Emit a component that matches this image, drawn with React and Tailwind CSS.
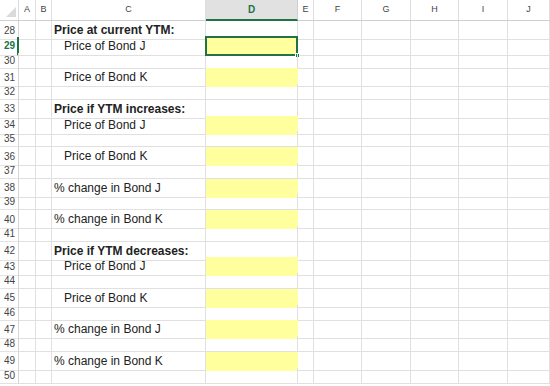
import React from 'react';

const cols = ['A', 'B', 'C', 'D', 'E', 'F', 'G', 'H', 'I', 'J'];

// row number -> [text, bold, indent, yellow]
const rows = [
    [28, 'Price at current YTM:', true, false, false],
    [29, 'Price of Bond J', false, true, true],
    [30, '', false, false, false],
    [31, 'Price of Bond K', false, true, true],
    [32, '', false, false, false],
    [33, 'Price if YTM increases:', true, false, false],
    [34, 'Price of Bond J', false, true, true],
    [35, '', false, false, false],
    [36, 'Price of Bond K', false, true, true],
    [37, '', false, false, false],
    [38, '% change in Bond J', false, false, true],
    [39, '', false, false, false],
    [40, '% change in Bond K', false, false, true],
    [41, '', false, false, false],
    [42, 'Price if YTM decreases:', true, false, false],
    [43, 'Price of Bond J', false, true, true],
    [44, '', false, false, false],
    [45, 'Price of Bond K', false, true, true],
    [46, '', false, false, false],
    [47, '% change in Bond J', false, false, true],
    [48, '', false, false, false],
    [49, '% change in Bond K', false, false, true],
    [50, '', false, false, false],
];

const grid = 'grid grid-cols-[19px_17px_16px_154px_92px_16px_48px_49px_48px_49px_1fr]';

export default function App() {
    return (
        <div className="w-[550px] h-[386px] overflow-hidden bg-white text-[#222]" style={{ fontFamily: '"Liberation Sans", Arial, sans-serif' }}>
            {/* Column headers */}
            <div className={`${grid} h-[21px] border-b border-[#cfcfcf]`}>
                <div className="relative border-r border-[#dcdcdc]">
                    <div className="absolute right-[2px] bottom-[3px] w-0 h-0 border-l-[10px] border-l-transparent border-b-[10px] border-b-[#dadada]" />
                </div>
                {cols.map(c => (
                    c === 'D' ? (
                        <div key={c} className="flex items-center justify-center bg-[#e1e1e1] border-b-2 border-[#217346] -mb-px border-r border-r-[#cfcfcf] text-[10px] font-bold text-[#217346]">{c}</div>
                    ) : (
                        <div key={c} className="flex items-center justify-center border-r border-[#dedede] text-[9px] text-[#444]">{c}</div>
                    )
                ))}
            </div>

            {rows.map(([n, text, bold, indent, yellow]) => {
                const sel = n === 29;
                return (
                    <div key={n} className={`${grid} h-[15.75px]`}>
                        <div className={`flex items-center pl-[4px] text-[10px] border-b border-[#e3e3e3] ${sel ? 'text-[#217346] font-bold border-r-2 border-r-[#217346]' : 'text-[#444] border-r border-r-[#d4d4d4]'}`}>{n}</div>
                        <div className="border-r border-b border-[#e0e0e0]" />
                        <div className="border-r border-b border-[#e0e0e0]" />
                        <div className={`flex items-center border-r border-b border-[#e0e0e0] text-[12px] whitespace-nowrap ${bold ? 'font-bold' : ''} ${indent ? 'pl-[12px]' : 'pl-[2px]'}`}>{text}</div>
                        <div className={`relative border-r border-b ${yellow ? 'bg-[#ffff9e] border-[#ffff9e]' : 'border-[#e0e0e0]'}`}>
                            {sel && (
                                <div className="absolute -left-px -top-px -right-px -bottom-px border-2 border-[#217346]">
                                    <div className="absolute -right-[4px] -bottom-[4px] w-[5px] h-[5px] bg-[#217346] border border-white" />
                                </div>
                            )}
                        </div>
                        {cols.slice(4).map(c => (
                            <div key={c} className="border-r border-b border-[#e0e0e0]" />
                        ))}
                    </div>
                );
            })}
        </div>
    );
}
